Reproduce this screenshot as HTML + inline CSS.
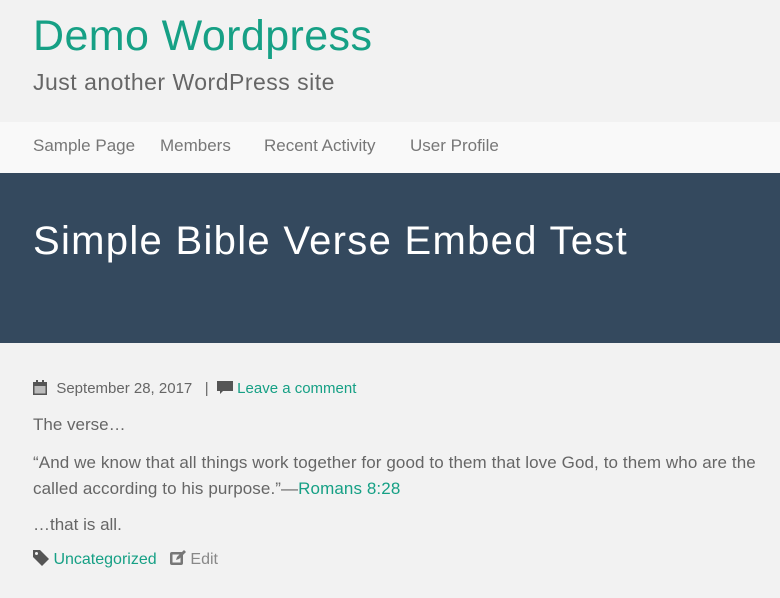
<!DOCTYPE html>
<html><head><style>
body{margin:0;width:780px;height:598px;background:#f2f2f2;font-family:"Liberation Sans",sans-serif;overflow:hidden;color:#666}
a{color:#16a085;text-decoration:none}
.h{height:122px;position:relative}
.t{position:absolute;left:33px;top:12px;font-size:43px;color:#16a085;letter-spacing:0.4px}
.d{position:absolute;left:33px;top:69px;font-size:23px;color:#666;letter-spacing:0.5px}
.nav{background:#f9f9f9;height:51px;position:relative;font-size:17px;color:#777}
.nav span{position:absolute;top:14px}
.ban{background:#34495e;height:170px;position:relative}
.ban h1{position:absolute;left:33px;margin:0;font-weight:normal;color:#fff;font-size:40px;top:46px;letter-spacing:1.3px}
.c{position:absolute;left:33px;font-size:16px;color:#666}
svg{vertical-align:-2px}
</style></head><body>
<div class="h"><div class="t">Demo Wordpress</div><div class="d">Just another WordPress site</div></div>
<div class="nav"><span style="left:33px">Sample Page</span><span style="left:160px">Members</span><span style="left:264px">Recent Activity</span><span style="left:410px">User Profile</span></div>
<div class="ban"><h1>Simple Bible Verse Embed Test</h1></div>
<div class="c" style="top:380px;font-size:15px"><svg width="15" height="15" viewBox="0 0 15 15"><rect x="0" y="2" width="14" height="13" fill="#555"/><rect x="3" y="0" width="2" height="4" fill="#555"/><rect x="9" y="0" width="2" height="4" fill="#555"/><rect x="1.5" y="6" width="11" height="7.5" fill="#bbb"/></svg> &nbsp;September 28, 2017 &nbsp; | &nbsp;<svg width="16" height="15" viewBox="0 0 16 15"><path d="M0 1h16v10H6l-3 3v-3H0z" fill="#555"/></svg> <a>Leave a comment</a></div>
<div class="c" style="top:415px;font-size:17px">The verse…</div>
<div class="c" style="top:450px;font-size:17px;width:740px;line-height:26px;letter-spacing:0.1px">“And we know that all things work together for good to them that love God, to them who are the called according to his purpose.”—<a>Romans 8:28</a></div>
<div class="c" style="top:515px;font-size:17px">…that is all.</div>
<div class="c" style="top:550px;font-size:16px"><svg width="16" height="16" viewBox="0 0 16 16"><path d="M0 0h7l9 9-7 7-9-9z" fill="#555"/><circle cx="3.5" cy="3.5" r="1.5" fill="#f2f2f2"/></svg> <a>Uncategorized</a> &nbsp;&nbsp;<svg width="16" height="16" viewBox="0 0 16 16"><rect x="0" y="2" width="13" height="13" rx="2" fill="#777"/><rect x="2.5" y="4.5" width="8" height="8" fill="#f2f2f2"/><path d="M6 10l1-3 7-7 2 2-7 7z" fill="#777"/></svg> <span style="color:#888">Edit</span></div>
</body></html>
